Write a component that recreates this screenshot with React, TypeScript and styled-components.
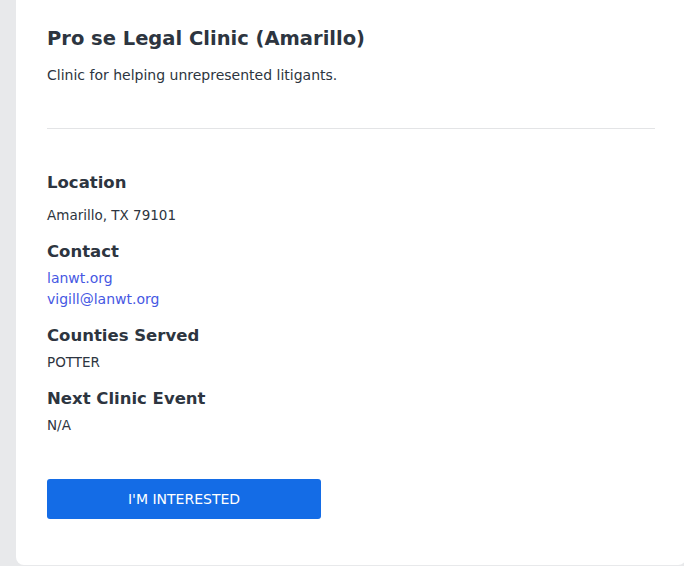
import React from "react";
import styled, { createGlobalStyle } from "styled-components";

const GlobalStyle = createGlobalStyle`
  html, body {
    margin: 0;
    padding: 0;
    background: #e8e9eb;
    font-family: "DejaVu Sans", "Liberation Sans", sans-serif;
    overflow: hidden;
  }
`;

const sections = [
  { title: "Location", lines: [{ text: "Amarillo, TX 79101" }], spaced: true },
  {
    title: "Contact",
    lines: [
      { text: "lanwt.org", href: "#" },
      { text: "vigill@lanwt.org", href: "#" },
    ],
  },
  { title: "Counties Served", lines: [{ text: "POTTER" }] },
  { title: "Next Clinic Event", lines: [{ text: "N/A" }] },
];

const App = () => {
  return (
    <>
      <GlobalStyle />
      <Page>
        <Card>
          <Header>
            <Title>Pro se Legal Clinic (Amarillo)</Title>
            <Description>Clinic for helping unrepresented litigants.</Description>
          </Header>
          <Divider />
          <Details>
            {sections.map((s) => (
              <Section key={s.title}>
                <SectionTitle>{s.title}</SectionTitle>
                <Lines $spaced={s.spaced}>
                  {s.lines.map((l) =>
                    l.href ? (
                      <Link key={l.text} href={l.href}>
                        {l.text}
                      </Link>
                    ) : (
                      <Line key={l.text}>{l.text}</Line>
                    )
                  )}
                </Lines>
              </Section>
            ))}
          </Details>
          <Button>I'M INTERESTED</Button>
        </Card>
      </Page>
    </>
  );
};

const Page = styled.div`
  height: 566px;
  padding: 0 0 1px 16px;
  box-sizing: border-box;
  display: flex;
`;

const Card = styled.div`
  width: 670px;
  flex-shrink: 0;
  background: #ffffff;
  border-radius: 0 0 8px 8px;
  padding: 27px 31px 0;
  box-sizing: border-box;
  display: flex;
  flex-direction: column;
`;

const Header = styled.div`
  padding-bottom: 44px;
`;

const Title = styled.h1`
  margin: 0;
  font-size: 19.5px;
  font-weight: 700;
  color: #2d3540;
  line-height: 24px;
`;

const Description = styled.p`
  margin: 15px 0 0;
  font-size: 14px;
  color: #2d3540;
  line-height: 18px;
`;

const Divider = styled.hr`
  margin: 0;
  border: 0;
  border-top: 1px solid #e3e4e6;
`;

const Details = styled.div`
  padding-top: 42px;
  display: flex;
  flex-direction: column;
  gap: 14px;
`;

const Section = styled.div`
  display: flex;
  flex-direction: column;
`;

const SectionTitle = styled.h2`
  margin: 0;
  font-size: 16.5px;
  font-weight: 700;
  color: #2d3540;
  line-height: 24px;
`;

const Lines = styled.div<{ $spaced?: boolean }>`
  display: flex;
  flex-direction: column;
  padding-top: ${(p) => (p.$spaced ? "10px" : "4px")};
`;

const Line = styled.span`
  font-size: 13.5px;
  color: #2d3540;
  line-height: 21px;
`;

const Link = styled.a`
  font-size: 14px;
  color: #4658e3;
  line-height: 21px;
  text-decoration: none;
  width: fit-content;
`;

const Button = styled.button`
  margin-top: 43px;
  width: 274px;
  height: 40px;
  border: 0;
  border-radius: 3px;
  background: #146ce6;
  color: #ffffff;
  font-family: inherit;
  font-size: 14px;
  font-weight: 400;
  cursor: pointer;
`;

export default App;
